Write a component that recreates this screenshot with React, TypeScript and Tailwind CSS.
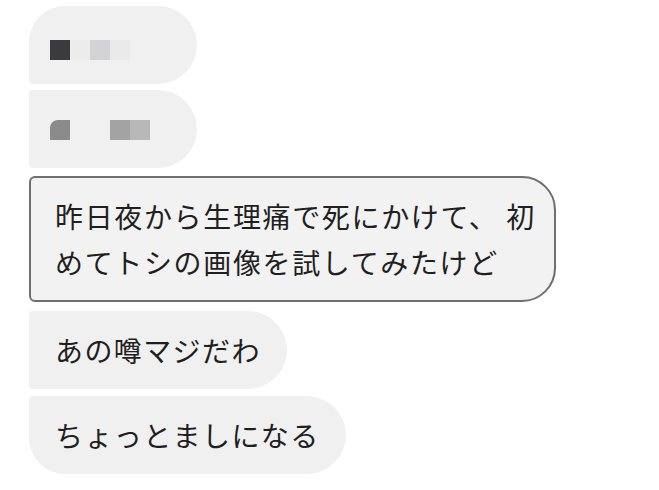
import React from "react";

const bubble = "bg-[#f0f0f0] text-[#1f1f1f] text-[28px] leading-[46px] tracking-[1.4px] whitespace-nowrap";

function Blocks({ cells }: { cells: { color: string; cut?: boolean }[] }) {
  return (
    <div className="flex">
      {cells.map((c, i) => (
        <div
          key={i}
          className={c.cut ? "w-5 h-5 rounded-tl-[8px]" : "w-5 h-5"}
          style={{ backgroundColor: c.color }}
        />
      ))}
    </div>
  );
}

export default function App() {
  return (
    <div className="w-[659px] h-[490px] bg-white font-[family-name:'Noto_Sans_CJK_JP',sans-serif] pl-[29px] pt-[6px] flex flex-col items-start">
      {/* blurred first messages */}
      <div className="w-[168px] h-[78px] bg-[#f0f0f0] rounded-tl-[36px] rounded-r-[39px] rounded-bl-[4px] pl-[21px] pt-[34px]">
        <Blocks
          cells={[
            { color: "#3b3b3d" },
            { color: "#ececec" },
            { color: "#d3d3d5" },
            { color: "#eaeaea" },
          ]}
        />
      </div>
      <div className="mt-[6px] w-[168px] h-[78px] bg-[#f0f0f0] rounded-l-[4px] rounded-r-[39px] pl-[21px] pt-[30px]">
        <Blocks
          cells={[
            { color: "#8b8b8b", cut: true },
            { color: "#f0f0f0" },
            { color: "#f0f0f0" },
            { color: "#a3a3a3" },
            { color: "#b8b8b8" },
          ]}
        />
      </div>

      {/* highlighted message */}
      <div
        className={`${bubble} tracking-[1.65px] mt-[8px] bg-[#f2f2f2] border-2 border-[#6f6f6f] rounded-l-[6px] rounded-r-[34px] pl-[24px] pr-[18px] py-[15px]`}
      >
        昨日夜から生理痛で死にかけて<span className="mr-[8px]">、</span>初
        <br />
        めてトシの画像を試してみたけど
      </div>

      <div className={`${bubble} mt-[9px] rounded-l-[4px] rounded-r-[39px] px-[26px] py-[16px]`}>
        あの噂マジだわ
      </div>
      <div className={`${bubble} mt-[7px] rounded-tl-[4px] rounded-bl-[36px] rounded-r-[39px] px-[26px] py-[16px]`}>
        ちょっとましになる
      </div>
    </div>
  );
}
